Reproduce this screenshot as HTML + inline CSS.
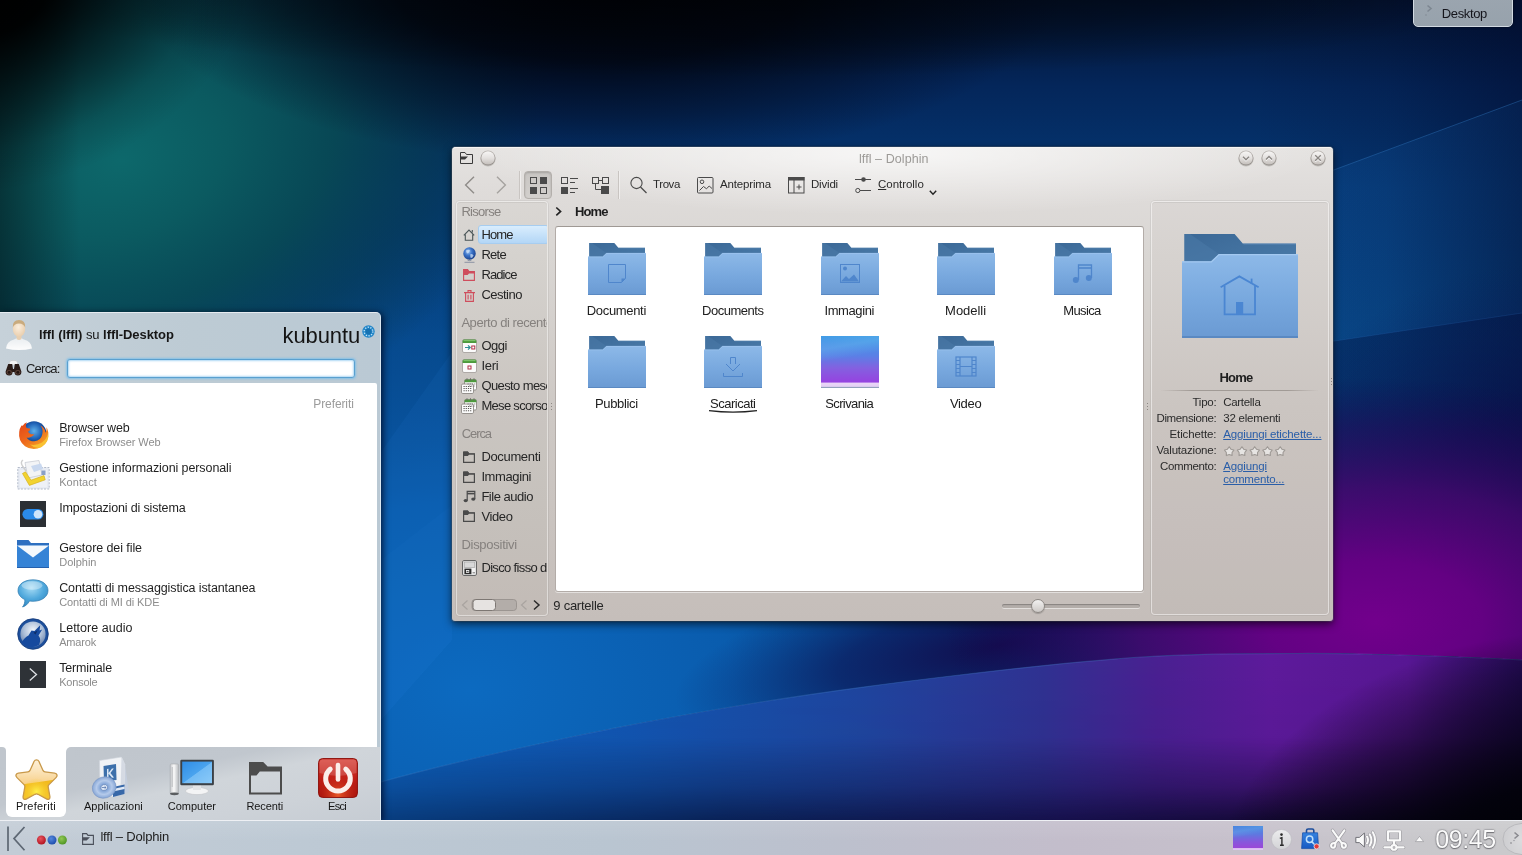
<!DOCTYPE html>
<html lang="it">
<head>
<meta charset="utf-8">
<title>Kubuntu – Dolphin</title>
<style>
*{box-sizing:border-box;margin:0;padding:0}
html,body{width:1522px;height:855px;overflow:hidden;background:#0a488c;font-family:"Liberation Sans","DejaVu Sans",sans-serif;color:#232323;}
#root{position:absolute;left:0;top:0;width:1522px;height:855px;will-change:transform;}
#bg{position:absolute;left:0;top:0;width:1522px;height:855px;}
.a{position:absolute}
.t{position:absolute;white-space:pre;}
svg{position:absolute;overflow:visible}
a{color:#2a5ea8;text-decoration:underline}
/* Desktop button */
#deskbtn{position:absolute;left:1413px;top:-5px;width:100px;height:32px;background:linear-gradient(#9ba5af,#97a2ac);border:1px solid #d2dae2;border-radius:5px;box-shadow:0 0 3px rgba(0,0,0,.5)}
/* Panel */
#panel{position:absolute;left:0;top:820px;width:1522px;height:35px;background:linear-gradient(rgba(255,255,255,.1),rgba(255,255,255,0) 60%),linear-gradient(90deg,#c3ccd6 0,#bdc9d4 20%,#b9c5d1 40%,#bcc0cd 55%,#c3bdcb 70%,#c6c0cb 82%,#c8c7cb 92%,#cacacc 100%);border-top:1px solid #eef0f4;}
/* Dolphin */
#dolphin{position:absolute;left:452px;top:147px;width:881px;height:474px;border-radius:4px 4px 3px 3px;background:radial-gradient(ellipse 430px 62px at 50% 6px,rgba(255,255,255,.7),rgba(255,255,255,.35) 50%,rgba(255,255,255,0) 100%),linear-gradient(#e5e3e1 0px,#dfdcda 40px,#d9d6d3 110px,#cec9c5 260px,#c5beba 473px);box-shadow:0 3px 9px rgba(0,0,0,.65),0 0 2px rgba(0,0,0,.7),0 0 0 1px rgba(200,215,235,.25);}
#dolphin:before{content:"";position:absolute;left:0;top:0;right:0;height:40px;border-radius:4px 4px 0 0;border-top:1px solid #f6f5f4;}
#sidebar{position:absolute;left:456px;top:201px;width:92px;height:415px;background:rgba(120,100,90,.035);border:1px solid rgba(255,255,255,.45);border-radius:4px;box-shadow:inset 0 1px 0 rgba(0,0,0,.06),0 0 0 1px rgba(0,0,0,.05)}
#view{position:absolute;left:555px;top:226px;width:589px;height:366px;background:#fff;border:1px solid #b3aca8;border-top-color:#9f9994;border-radius:3px;box-shadow:0 1px 0 rgba(255,255,255,.5)}
#info{position:absolute;left:1151px;top:201px;width:178px;height:414px;background:rgba(120,100,90,.03);border:1px solid rgba(255,255,255,.5);border-radius:4px;box-shadow:inset 0 1px 0 rgba(0,0,0,.06),0 0 0 1px rgba(0,0,0,.05)}
/* Kickoff */
#kick{position:absolute;left:0;top:312px;width:381px;height:509px;background:linear-gradient(90deg,#c6d1d9,#bdcbd4 50%,#bac9d4);border-top:1px solid #e6ebf0;border-right:1px solid #dbe8f1;border-top-right-radius:5px;box-shadow:2px 1px 7px rgba(0,0,20,.75)}
#klist{position:absolute;left:0;top:383px;width:377px;height:364px;background:#fff;border-top-right-radius:2px}
#ktabs{position:absolute;left:0;top:747px;width:380px;height:73px;background:linear-gradient(168deg,#bfc5cc 0,#c1c7ce 38%,#d0d5da 52%,#cdd2d8 75%,#c6ccd3 100%);}
#ktab1{position:absolute;left:6px;top:746px;width:60px;height:71px;background:#fff;border-radius:0 0 6px 6px}
#ktl{position:absolute;left:0;top:747px;width:6px;height:20px;background:#fff}
#ktl:after{content:"";position:absolute;inset:0;background:#c0c6cd;border-top-right-radius:4px}
#ktr{position:absolute;left:66px;top:747px;width:8px;height:20px;background:#fff}
#ktr:after{content:"";position:absolute;inset:0;background:#c0c6cd;border-top-left-radius:5px}
</style>
</head>
<body>
<div id="root">
<svg id="bg" viewBox="0 0 1522 855">
<defs>
<radialGradient id="g-teal" cx="0" cy="0" r="1" gradientUnits="userSpaceOnUse" gradientTransform="translate(122 160) rotate(-20) scale(440 300)">
<stop offset="0" stop-color="#0d686b"/><stop offset=".25" stop-color="#0b5b60" stop-opacity=".98"/><stop offset=".5" stop-color="#084a53" stop-opacity=".9"/><stop offset=".75" stop-color="#063a4a" stop-opacity=".55"/><stop offset="1" stop-color="#04303c" stop-opacity="0"/>
</radialGradient>
<radialGradient id="g-blue" cx="0" cy="0" r="1" gradientUnits="userSpaceOnUse" gradientTransform="translate(470 690) scale(660 470)">
<stop offset="0" stop-color="#0c6ac0"/><stop offset=".4" stop-color="#0a5fb2" stop-opacity=".92"/><stop offset=".75" stop-color="#07509a" stop-opacity=".5"/><stop offset="1" stop-color="#064482" stop-opacity="0"/>
</radialGradient>
<radialGradient id="g-purple" cx="0" cy="0" r="1" gradientUnits="userSpaceOnUse" gradientTransform="translate(1375 622) scale(430 245)">
<stop offset="0" stop-color="#72008c"/><stop offset=".25" stop-color="#660084" stop-opacity=".97"/><stop offset=".55" stop-color="#43086e" stop-opacity=".85"/><stop offset=".8" stop-color="#24085a" stop-opacity=".5"/><stop offset="1" stop-color="#10084a" stop-opacity="0"/>
</radialGradient>
<radialGradient id="g-dkp" cx="0" cy="0" r="1" gradientUnits="userSpaceOnUse" gradientTransform="translate(1560 560) scale(330 300)">
<stop offset="0" stop-color="#0a0638" stop-opacity=".9"/><stop offset=".5" stop-color="#0c0a48" stop-opacity=".55"/><stop offset="1" stop-color="#0a1a5a" stop-opacity="0"/>
</radialGradient>
<radialGradient id="g-mid" cx="0" cy="0" r="1" gradientUnits="userSpaceOnUse" gradientTransform="translate(1000 645) rotate(-10) scale(330 90)">
<stop offset="0" stop-color="#120a4a" stop-opacity=".95"/><stop offset=".5" stop-color="#0c1a5c" stop-opacity=".7"/><stop offset="1" stop-color="#0a2a70" stop-opacity="0"/>
</radialGradient>
<linearGradient id="g-rv" x1="1250" y1="0" x2="1522" y2="0" gradientUnits="userSpaceOnUse">
<stop offset="0" stop-color="#020a2c" stop-opacity="0"/><stop offset=".5" stop-color="#020a2c" stop-opacity=".14"/><stop offset="1" stop-color="#020a2c" stop-opacity=".52"/>
</linearGradient>
<linearGradient id="g-lv" x1="0" y1="0" x2="80" y2="0" gradientUnits="userSpaceOnUse">
<stop offset="0" stop-color="#000" stop-opacity=".4"/><stop offset="1" stop-color="#000" stop-opacity="0"/>
</linearGradient>
<radialGradient id="g-tl" cx="0" cy="0" r="1" gradientUnits="userSpaceOnUse" gradientTransform="translate(-10 -10) rotate(-15) scale(270 200)">
<stop offset="0" stop-color="#000"/><stop offset=".22" stop-color="#000" stop-opacity=".96"/><stop offset=".5" stop-color="#000" stop-opacity=".55"/><stop offset=".8" stop-color="#000" stop-opacity=".14"/><stop offset="1" stop-color="#000" stop-opacity="0"/>
</radialGradient>
<radialGradient id="g-tc" cx="0" cy="0" r="1" gradientUnits="userSpaceOnUse" gradientTransform="translate(600 -25) scale(470 190)">
<stop offset="0" stop-color="#000208"/><stop offset=".45" stop-color="#010612" stop-opacity=".88"/><stop offset=".75" stop-color="#020a1c" stop-opacity=".45"/><stop offset="1" stop-color="#020a20" stop-opacity="0"/>
</radialGradient>
<radialGradient id="g-topband" cx="0" cy="0" r="1" gradientUnits="userSpaceOnUse" gradientTransform="translate(760 -8) scale(760 85)">
<stop offset="0" stop-color="#000" stop-opacity=".6"/><stop offset=".55" stop-color="#000" stop-opacity=".35"/><stop offset="1" stop-color="#000" stop-opacity="0"/>
</radialGradient>
<radialGradient id="g-br" cx="0" cy="0" r="1" gradientUnits="userSpaceOnUse" gradientTransform="translate(1590 900) scale(380 270)">
<stop offset="0" stop-color="#000"/><stop offset=".45" stop-color="#02020a" stop-opacity=".95"/><stop offset=".75" stop-color="#04020f" stop-opacity=".5"/><stop offset="1" stop-color="#000" stop-opacity="0"/>
</radialGradient>
<linearGradient id="g-base" x1="0" y1="0" x2="0" y2="855" gradientUnits="userSpaceOnUse">
<stop offset="0" stop-color="#03122e"/><stop offset=".1" stop-color="#04265a"/><stop offset=".22" stop-color="#053874"/><stop offset=".4" stop-color="#064482"/><stop offset=".55" stop-color="#063f7e"/><stop offset="1" stop-color="#063678"/>
</linearGradient>
<linearGradient id="g-ray" x1="900" y1="360" x2="1522" y2="200" gradientUnits="userSpaceOnUse">
<stop offset="0" stop-color="#1a6fc4" stop-opacity="0"/><stop offset=".7" stop-color="#1563b6" stop-opacity=".22"/><stop offset="1" stop-color="#1260b0" stop-opacity=".26"/>
</linearGradient>
<linearGradient id="g-ray2" x1="0" y1="320" x2="0" y2="520" gradientUnits="userSpaceOnUse">
<stop offset="0" stop-color="#051d52" stop-opacity=".42"/><stop offset="1" stop-color="#051d52" stop-opacity=".1"/>
</linearGradient>
<linearGradient id="g-wave" x1="380" y1="0" x2="1522" y2="0" gradientUnits="userSpaceOnUse">
<stop offset="0" stop-color="#0d62be"/><stop offset=".22" stop-color="#1256b2"/><stop offset=".42" stop-color="#1f46a0"/><stop offset=".58" stop-color="#303292"/><stop offset=".68" stop-color="#4a2092"/><stop offset=".78" stop-color="#5e1a9c"/><stop offset=".9" stop-color="#581694"/><stop offset="1" stop-color="#260c5c"/>
</linearGradient>
<linearGradient id="g-wavefade" x1="0" y1="650" x2="0" y2="825" gradientUnits="userSpaceOnUse">
<stop offset="0" stop-color="#fff"/><stop offset=".5" stop-color="#fff" stop-opacity=".95"/><stop offset=".78" stop-color="#fff" stop-opacity=".55"/><stop offset="1" stop-color="#fff" stop-opacity=".06"/>
</linearGradient>
<mask id="m-wave"><rect x="0" y="600" width="1522" height="255" fill="url(#g-wavefade)"/></mask>
<linearGradient id="g-under" x1="380" y1="0" x2="1522" y2="0" gradientUnits="userSpaceOnUse">
<stop offset="0" stop-color="#083876"/><stop offset=".3" stop-color="#081c4c"/><stop offset=".6" stop-color="#120c42"/><stop offset="1" stop-color="#04020f"/>
</linearGradient>
<clipPath id="c-above"><path clip-rule="evenodd" d="M0,0 H1522 V855 H0 Z M0,905 C66.7,885.0 136.5,860.5 200,840 C263.5,819.5 319.2,799.2 381,782 C442.8,764.8 507.7,750.3 571,737 C634.3,723.7 697.7,712.2 761,702 C824.3,691.8 887.7,683.5 951,676 C1014.3,668.5 1083.7,660.8 1141,657 C1198.3,653.2 1251.8,653.8 1295,653.5 C1338.2,653.2 1362.2,653.9 1400,655 C1437.8,656.1 1472.0,657.2 1522,660 L1522,855 L0,855 Z"/></clipPath>
</defs>
<rect width="1522" height="855" fill="url(#g-base)"/>
<rect width="1522" height="855" fill="url(#g-blue)"/>
<polygon points="567,455 1522,100 1522,313" fill="url(#g-ray)"/>
<polygon points="567,455 1522,313 1522,700 1140,700" fill="url(#g-ray2)"/>
<rect x="1250" y="0" width="272" height="660" fill="url(#g-rv)"/>
<path d="M567,455 L1522,100" stroke="#3a86d0" stroke-opacity=".35" stroke-width="1" fill="none"/><path d="M1000,391 L1522,313" stroke="#2a70c0" stroke-opacity=".25" stroke-width="1" fill="none"/>
<polygon points="381,452 452,352 452,640 381,720" fill="#2a80d8" fill-opacity=".1"/>
<polygon points="381,560 452,505 452,640 381,720" fill="#2a80d8" fill-opacity=".08"/>
<rect width="1522" height="855" fill="url(#g-teal)"/>
<rect width="1522" height="855" fill="url(#g-tc)"/>
<rect width="1522" height="90" fill="url(#g-topband)"/>
<rect width="1522" height="855" fill="url(#g-dkp)"/>
<g clip-path="url(#c-above)"><rect width="1522" height="855" fill="url(#g-mid)"/><rect width="1522" height="855" fill="url(#g-purple)"/></g>
<path d="M0,905 C66.7,885.0 136.5,860.5 200,840 C263.5,819.5 319.2,799.2 381,782 C442.8,764.8 507.7,750.3 571,737 C634.3,723.7 697.7,712.2 761,702 C824.3,691.8 887.7,683.5 951,676 C1014.3,668.5 1083.7,660.8 1141,657 C1198.3,653.2 1251.8,653.8 1295,653.5 C1338.2,653.2 1362.2,653.9 1400,655 C1437.8,656.1 1472.0,657.2 1522,660 L1522,855 L0,855 Z" fill="url(#g-under)"/>
<path d="M0,905 C66.7,885.0 136.5,860.5 200,840 C263.5,819.5 319.2,799.2 381,782 C442.8,764.8 507.7,750.3 571,737 C634.3,723.7 697.7,712.2 761,702 C824.3,691.8 887.7,683.5 951,676 C1014.3,668.5 1083.7,660.8 1141,657 C1198.3,653.2 1251.8,653.8 1295,653.5 C1338.2,653.2 1362.2,653.9 1400,655 C1437.8,656.1 1472.0,657.2 1522,660 L1522,855 L0,855 Z" fill="url(#g-wave)" mask="url(#m-wave)"/><path d="M0,905 C66.7,885.0 136.5,860.5 200,840 C263.5,819.5 319.2,799.2 381,782 C442.8,764.8 507.7,750.3 571,737 C634.3,723.7 697.7,712.2 761,702 C824.3,691.8 887.7,683.5 951,676 C1014.3,668.5 1083.7,660.8 1141,657 C1198.3,653.2 1251.8,653.8 1295,653.5 C1338.2,653.2 1362.2,653.9 1400,655 C1437.8,656.1 1472.0,657.2 1522,660" fill="none" stroke="#5aa0e8" stroke-opacity=".22" stroke-width="1.2"/>
<rect width="80" height="855" fill="url(#g-lv)"/>
<rect width="1522" height="855" fill="url(#g-tl)"/>
<rect width="1522" height="855" fill="url(#g-br)"/>
</svg>

<div id="deskbtn"></div>
<svg style="left:1424px;top:4px" width="10" height="14" viewBox="0 0 10 14"><path d="M3.5,1.5 L7,4.5 L3.5,7.5" fill="none" stroke="#7d8791" stroke-width="1.6"/><circle cx="2" cy="11" r="1" fill="#8b959f"/></svg>
<div class="t" style="left:1441.7px;top:4.6px;font-size:13px;line-height:17px;letter-spacing:-0.34px;color:#15151c;">Desktop</div>
<div id="dolphin"></div>
<div id="sidebar"></div><div id="view"></div><div id="info"></div>
<div class="t" style="left:859.0px;top:150.7px;font-size:12.5px;line-height:16px;letter-spacing:0.07px;color:#9c9a97;">lffl – Dolphin</div>
<svg style="left:460px;top:152px" width="13" height="12" viewBox="0 0 13 12"><path d="M.5,11.5 V.5 H5 L6.5,2.5 H12.5 V11.5 Z" fill="none" stroke="#3a3a3a" stroke-width="1"/><path d="M.5,4.5 H8 L5,7.5 H.5 Z" fill="#3a3a3a"/></svg>
<svg style="left:479.4px;top:148.7px" width="18" height="19" viewBox="0 0 18 19"><defs><linearGradient id="wb488" x1="0" y1="0" x2="0" y2="1"><stop offset="0" stop-color="#f7f6f5"/><stop offset=".5" stop-color="#e4e1df"/><stop offset="1" stop-color="#c4bfbb"/></linearGradient><linearGradient id="wr488" x1="0" y1="0" x2="0" y2="1"><stop offset="0" stop-color="#b9b4b0"/><stop offset="1" stop-color="#8f8a86"/></linearGradient></defs><circle cx="9" cy="10" r="7.6" fill="#6d6762" opacity=".28"/><circle cx="9" cy="9" r="7.5" fill="url(#wr488)"/><circle cx="9" cy="8.9" r="6.7" fill="url(#wb488)"/><g transform="translate(1 1)"></g></svg>
<svg style="left:1237.4px;top:148.7px" width="18" height="19" viewBox="0 0 18 19"><defs><linearGradient id="wb1246" x1="0" y1="0" x2="0" y2="1"><stop offset="0" stop-color="#f7f6f5"/><stop offset=".5" stop-color="#e4e1df"/><stop offset="1" stop-color="#c4bfbb"/></linearGradient><linearGradient id="wr1246" x1="0" y1="0" x2="0" y2="1"><stop offset="0" stop-color="#b9b4b0"/><stop offset="1" stop-color="#8f8a86"/></linearGradient></defs><circle cx="9" cy="10" r="7.6" fill="#6d6762" opacity=".28"/><circle cx="9" cy="9" r="7.5" fill="url(#wr1246)"/><circle cx="9" cy="8.9" r="6.7" fill="url(#wb1246)"/><g transform="translate(1 1)"><path d="M5,6.8 L8,9.8 L11,6.8" fill="none" stroke="#fff" opacity=".8" transform="translate(0 1)" stroke-width="1.3"/><path d="M5,6.8 L8,9.8 L11,6.8" fill="none" stroke="#8a8683" stroke-width="1.3"/></g></svg>
<svg style="left:1260.4px;top:148.7px" width="18" height="19" viewBox="0 0 18 19"><defs><linearGradient id="wb1269" x1="0" y1="0" x2="0" y2="1"><stop offset="0" stop-color="#f7f6f5"/><stop offset=".5" stop-color="#e4e1df"/><stop offset="1" stop-color="#c4bfbb"/></linearGradient><linearGradient id="wr1269" x1="0" y1="0" x2="0" y2="1"><stop offset="0" stop-color="#b9b4b0"/><stop offset="1" stop-color="#8f8a86"/></linearGradient></defs><circle cx="9" cy="10" r="7.6" fill="#6d6762" opacity=".28"/><circle cx="9" cy="9" r="7.5" fill="url(#wr1269)"/><circle cx="9" cy="8.9" r="6.7" fill="url(#wb1269)"/><g transform="translate(1 1)"><path d="M5,9.5 L8,6.5 L11,9.5" fill="none" stroke="#fff" opacity=".8" transform="translate(0 1)" stroke-width="1.3"/><path d="M5,9.5 L8,6.5 L11,9.5" fill="none" stroke="#8a8683" stroke-width="1.3"/></g></svg>
<svg style="left:1309.4px;top:148.7px" width="18" height="19" viewBox="0 0 18 19"><defs><linearGradient id="wb1318" x1="0" y1="0" x2="0" y2="1"><stop offset="0" stop-color="#f7f6f5"/><stop offset=".5" stop-color="#e4e1df"/><stop offset="1" stop-color="#c4bfbb"/></linearGradient><linearGradient id="wr1318" x1="0" y1="0" x2="0" y2="1"><stop offset="0" stop-color="#b9b4b0"/><stop offset="1" stop-color="#8f8a86"/></linearGradient></defs><circle cx="9" cy="10" r="7.6" fill="#6d6762" opacity=".28"/><circle cx="9" cy="9" r="7.5" fill="url(#wr1318)"/><circle cx="9" cy="8.9" r="6.7" fill="url(#wb1318)"/><g transform="translate(1 1)"><path d="M5.2,5.2 L10.8,10.8 M10.8,5.2 L5.2,10.8" fill="none" stroke="#fff" opacity=".8" transform="translate(0 1)" stroke-width="1.3"/><path d="M5.2,5.2 L10.8,10.8 M10.8,5.2 L5.2,10.8" fill="none" stroke="#8a8683" stroke-width="1.3"/></g></svg>
<svg style="left:463px;top:176px" width="14" height="18" viewBox="0 0 14 18"><path d="M11,.8 L2.6,9 L11,17.2" fill="none" stroke="#8f8c89" stroke-width="1.4"/></svg>
<svg style="left:494px;top:176px" width="14" height="18" viewBox="0 0 14 18"><path d="M3,.8 L11.4,9 L3,17.2" fill="none" stroke="#a5a29f" stroke-width="1.4"/></svg>
<div class="a" style="left:519px;top:171px;width:2px;height:28px;background:linear-gradient(90deg,#c9c5c2 50%,#f0eeed 50%)"></div>
<div class="a" style="left:524px;top:171px;width:28px;height:28px;border-radius:4px;background:linear-gradient(#c9c6c3,#d3d0cd);border:1px solid #b3afab;box-shadow:inset 0 1px 2px rgba(0,0,0,.18)"></div>
<svg style="left:530px;top:177px" width="17" height="17" viewBox="0 0 17 17"><rect x=".5" y=".5" width="6" height="6" fill="none" stroke="#4a4a4a"/><rect x="10" y="0" width="7" height="7" fill="#4a4a4a"/><rect x="0" y="10" width="7" height="7" fill="#4a4a4a"/><rect x="10.5" y="10.5" width="6" height="6" fill="none" stroke="#4a4a4a"/></svg>
<svg style="left:561px;top:177px" width="17" height="17" viewBox="0 0 17 17"><rect x=".5" y=".5" width="6" height="6" fill="none" stroke="#4a4a4a"/><rect x="0" y="10" width="7" height="7" fill="#4a4a4a"/><path d="M9,1.5 H17 M9,5.5 H14 M9,11.5 H17 M9,15.5 H14" stroke="#4a4a4a" stroke-width="1"/></svg>
<svg style="left:592px;top:177px" width="17" height="17" viewBox="0 0 17 17"><rect x=".5" y=".5" width="6" height="6" fill="none" stroke="#4a4a4a"/><rect x="10.5" y=".5" width="6" height="6" fill="none" stroke="#4a4a4a"/><rect x="9" y="9" width="8" height="8" fill="#4a4a4a"/><path d="M7,3.5 H10 M3.5,7 V12.5 H9" fill="none" stroke="#4a4a4a"/></svg>
<div class="a" style="left:618px;top:171px;width:2px;height:28px;background:linear-gradient(90deg,#c9c5c2 50%,#f0eeed 50%)"></div>
<svg style="left:630px;top:176px" width="18" height="18" viewBox="0 0 18 18"><circle cx="6.5" cy="7" r="5.6" fill="none" stroke="#4a4a4a" stroke-width="1.1"/><path d="M10.5,11 L16.5,17" stroke="#4a4a4a" stroke-width="1.3"/></svg>
<div class="t" style="left:653.0px;top:177.0px;font-size:11.5px;line-height:15px;letter-spacing:-0.40px;color:#2b2b2b;">Trova</div>
<svg style="left:697px;top:177px" width="17" height="17" viewBox="0 0 17 17"><rect x=".5" y=".5" width="15.5" height="15.5" rx="1" fill="none" stroke="#4a4a4a"/><circle cx="5" cy="4.8" r="1.8" fill="none" stroke="#4a4a4a"/><path d="M2.5,13.5 L6.5,9.5 L9.5,11.8 L12.2,9 L15,11.5" fill="none" stroke="#4a4a4a"/></svg>
<div class="t" style="left:720.0px;top:177.0px;font-size:11.5px;line-height:15px;letter-spacing:-0.16px;color:#2b2b2b;">Anteprima</div>
<svg style="left:788px;top:177px" width="17" height="17" viewBox="0 0 17 17"><rect x=".5" y=".5" width="15.5" height="15.5" fill="none" stroke="#4a4a4a"/><rect x="0" y="0" width="16.5" height="3.5" fill="#4a4a4a"/><path d="M6,3 V16 M8.5,10 H13.5 M11,7.5 V12.5" stroke="#4a4a4a"/></svg>
<div class="t" style="left:811.0px;top:177.0px;font-size:11.5px;line-height:15px;letter-spacing:-0.19px;color:#2b2b2b;">Dividi</div>
<svg style="left:855px;top:176px" width="17" height="18" viewBox="0 0 17 18"><path d="M0,3.5 H16 M5,14.5 H16" stroke="#4a4a4a"/><circle cx="8.5" cy="3.5" r="2.3" fill="#4a4a4a"/><circle cx="2.8" cy="14.5" r="2.1" fill="none" stroke="#4a4a4a"/></svg>
<div class="t" style="left:878.0px;top:177.0px;font-size:11.5px;line-height:15px;letter-spacing:-0.03px;color:#2b2b2b;"><u>C</u>ontrollo</div>
<svg style="left:929px;top:190px" width="8" height="6" viewBox="0 0 8 6"><path d="M.8,.8 L4,4.2 L7.2,.8" fill="none" stroke="#222" stroke-width="1.4"/></svg>
<svg style="left:555px;top:206px" width="8" height="11" viewBox="0 0 8 11"><path d="M1.3,1.5 L5.6,5.4 L1.3,9.3" fill="none" stroke="#222" stroke-width="1.6"/></svg>
<div class="t" style="left:575.0px;top:203.0px;font-size:13px;line-height:17px;font-weight:700;letter-spacing:-0.86px;color:#1e1e1e;">Home</div>
<div class="a" style="left:456px;top:201px;width:91px;height:415px;overflow:hidden">
<div class="t" style="left:5.4px;top:2.0px;font-size:13px;line-height:17px;letter-spacing:-0.71px;color:#85817e;">Risorse</div>
<div class="a" style="left:21.5px;top:24px;width:71px;height:19px;border-radius:3px;background:linear-gradient(#d9edfd,#b3d6f6);border:1px solid #a7cdf0"></div>
<div class="t" style="left:25.4px;top:25.0px;font-size:13px;line-height:17px;letter-spacing:-0.90px;color:#262626;">Home</div>
<div class="t" style="left:25.4px;top:45.2px;font-size:13px;line-height:17px;letter-spacing:-0.72px;color:#262626;">Rete</div>
<div class="t" style="left:25.4px;top:65.3px;font-size:13px;line-height:17px;letter-spacing:-0.89px;color:#262626;">Radice</div>
<div class="t" style="left:25.4px;top:85.4px;font-size:13px;line-height:17px;letter-spacing:-0.50px;color:#262626;">Cestino</div>
<div class="t" style="left:5.4px;top:113.4px;font-size:13px;line-height:17px;color:#85817e;letter-spacing:-.45px;">Aperto di recente</div>
<div class="t" style="left:25.4px;top:136.0px;font-size:13px;line-height:17px;letter-spacing:-0.47px;color:#262626;">Oggi</div>
<div class="t" style="left:25.4px;top:155.9px;font-size:13px;line-height:17px;letter-spacing:-0.24px;color:#262626;">Ieri</div>
<div class="t" style="left:25.4px;top:176.2px;font-size:13px;line-height:17px;color:#262626;letter-spacing:-.6px;">Questo mese</div>
<div class="t" style="left:25.4px;top:196.2px;font-size:13px;line-height:17px;letter-spacing:-0.69px;color:#262626;">Mese scorso</div>
<div class="t" style="left:5.7px;top:223.6px;font-size:13px;line-height:17px;letter-spacing:-1.08px;color:#85817e;">Cerca</div>
<div class="t" style="left:25.4px;top:247.0px;font-size:13px;line-height:17px;letter-spacing:-0.34px;color:#262626;">Documenti</div>
<div class="t" style="left:25.4px;top:266.8px;font-size:13px;line-height:17px;letter-spacing:-0.39px;color:#262626;">Immagini</div>
<div class="t" style="left:25.4px;top:286.8px;font-size:13px;line-height:17px;letter-spacing:-0.48px;color:#262626;">File audio</div>
<div class="t" style="left:25.4px;top:306.5px;font-size:13px;line-height:17px;letter-spacing:-0.38px;color:#262626;">Video</div>
<div class="t" style="left:5.4px;top:334.7px;font-size:13px;line-height:17px;letter-spacing:-0.27px;color:#85817e;">Dispositivi</div>
<div class="t" style="left:25.4px;top:357.6px;font-size:13px;line-height:17px;color:#262626;letter-spacing:-.65px;">Disco fisso da 20 GiB</div>
</div>
<svg style="left:463px;top:229px" width="12" height="12" viewBox="0 0 12 12"><path d="M.8,6.3 L6,1 L11.2,6.3 M2.3,5.5 V11.3 H9.7 V5.5 M9.3,1 V3.6" fill="none" stroke="#4b5658" stroke-width="1.1"/></svg>
<svg style="left:462.5px;top:246.5px" width="13" height="16" viewBox="0 0 13 16"><defs><radialGradient id="gl" cx=".4" cy=".35" r=".7"><stop offset="0" stop-color="#9cc4f2"/><stop offset=".45" stop-color="#3a72c8"/><stop offset="1" stop-color="#173c86"/></radialGradient></defs><circle cx="6.5" cy="6.5" r="6.2" fill="url(#gl)"/><path d="M3,3.5 Q5,2 7,3.2 Q6.5,5.5 4.5,6.5 Q3,5.5 3,3.5 Z M7.5,7 Q10,6.5 10.5,8.5 Q9.5,11 7.8,11 Q7,9 7.5,7 Z" fill="#cfe2f8" opacity=".75"/><path d="M4.5,13 Q6.5,14.2 8.5,13" stroke="#7d8ba0" fill="none" stroke-width="1"/><path d="M1.5,15.3 H11.5" stroke="#8b93a3" stroke-width="1"/></svg>
<svg style="left:463px;top:269px" width="12" height="12" viewBox="0 0 12 12"><path d="M.6,11.4 V.6 H4.6 L6,2.6 H11.4 V11.4 Z" fill="none" stroke="#cf4d5c" stroke-width="1.1"/><path d="M.6,.6 H4.6 L6,2.6 H11.4 V4.6 H6 L4.6,6 H.6 Z" fill="#cf4d5c"/></svg>
<svg style="left:464px;top:289.5px" width="11" height="12" viewBox="0 0 11 12"><path d="M0,2.6 H11 M4,2.4 V.6 H7 V2.4 M1.6,2.8 V11.4 H9.4 V2.8 M4.1,4.8 V9.4 M6.9,4.8 V9.4" fill="none" stroke="#cf4d5c" stroke-width="1.1"/></svg>
<svg style="left:461.5px;top:338px" width="15" height="16" viewBox="0 0 15 16"><rect x=".5" y="1.5" width="14" height="13" rx="1.5" fill="#fbfbfb" stroke="#a7a39f" stroke-width=".9"/><path d="M.6,5 V3 Q.6,1.5 2,1.5 H13 Q14.4,1.5 14.4,3 V5 Z" fill="#4c9a3c"/><path d="M1.5,2.6 H13.5" stroke="#8fd27c" stroke-width=".8"/><path d="M3,9.5 H8 M6,7.3 L8.2,9.5 L6,11.7" fill="none" stroke="#2e8f96" stroke-width="1.2"/><rect x="9.8" y="8" width="3" height="3" fill="#fff" stroke="#b03048" stroke-width="1"/></svg>
<svg style="left:461.5px;top:358px" width="15" height="16" viewBox="0 0 15 16"><rect x=".5" y="1.5" width="14" height="13" rx="1.5" fill="#fbfbfb" stroke="#a7a39f" stroke-width=".9"/><path d="M.6,5 V3 Q.6,1.5 2,1.5 H13 Q14.4,1.5 14.4,3 V5 Z" fill="#4c9a3c"/><path d="M1.5,2.6 H13.5" stroke="#8fd27c" stroke-width=".8"/><rect x="6" y="8" width="3" height="3" fill="#fff" stroke="#b03048" stroke-width="1"/></svg>
<svg style="left:461px;top:377.6px" width="16" height="16" viewBox="0 0 16 16"><rect x="3.5" y="1.5" width="12" height="10.5" rx="1.3" fill="#fbfbfb" stroke="#8d8985" stroke-width=".9"/><path d="M3.6,4.2 V2.8 Q3.6,1.5 5,1.5 H14 Q15.4,1.5 15.4,2.8 V4.2 Z" fill="#4c9a3c"/><path d="M6,.3 V2.6 M9.5,.3 V2.6 M13,.3 V2.6" stroke="#6d6a66" stroke-width="1"/><rect x=".5" y="6" width="12" height="9.5" rx="1.3" fill="#fbfbfb" stroke="#8d8985" stroke-width=".9"/><path d="M2.5,8.5 H11 M2.5,10.5 H11 M2.5,12.7 H11" stroke="#5b5856" stroke-width="1.1" stroke-dasharray="1.2 1"/><path d="M6.5,6 H14.5 M8,8 H14.2" stroke="#5b5856" stroke-width="1.1" stroke-dasharray="1.2 1" opacity=".7"/></svg>
<svg style="left:461px;top:397.6px" width="16" height="16" viewBox="0 0 16 16"><rect x="3.5" y="1.5" width="12" height="10.5" rx="1.3" fill="#fbfbfb" stroke="#8d8985" stroke-width=".9"/><path d="M3.6,4.2 V2.8 Q3.6,1.5 5,1.5 H14 Q15.4,1.5 15.4,2.8 V4.2 Z" fill="#4c9a3c"/><path d="M6,.3 V2.6 M9.5,.3 V2.6 M13,.3 V2.6" stroke="#6d6a66" stroke-width="1"/><rect x=".5" y="6" width="12" height="9.5" rx="1.3" fill="#fbfbfb" stroke="#8d8985" stroke-width=".9"/><path d="M2.5,8.5 H11 M2.5,10.5 H11 M2.5,12.7 H11" stroke="#5b5856" stroke-width="1.1" stroke-dasharray="1.2 1"/><path d="M6.5,6 H14.5 M8,8 H14.2" stroke="#5b5856" stroke-width="1.1" stroke-dasharray="1.2 1" opacity=".7"/></svg>
<svg style="left:462.5px;top:450.5px" width="13" height="12" viewBox="0 0 13 12"><path d="M.6,11.4 V1 H4.6 L6,2.8 H11.4 V11.4 Z" fill="none" stroke="#4a4a4a" stroke-width="1.2"/><path d="M.6,.6 H4.8 L6.2,2.6 H11.6 V3.6 H6.2 L4.8,5 H.6 Z" fill="#4a4a4a"/></svg>
<svg style="left:462.5px;top:470.5px" width="13" height="12" viewBox="0 0 13 12"><path d="M.6,11.4 V1 H4.6 L6,2.8 H11.4 V11.4 Z" fill="none" stroke="#4a4a4a" stroke-width="1.2"/><path d="M.6,.6 H4.8 L6.2,2.6 H11.6 V3.6 H6.2 L4.8,5 H.6 Z" fill="#4a4a4a"/></svg>
<svg style="left:462.5px;top:490px" width="13" height="13" viewBox="0 0 13 13"><path d="M4.2,10.5 V1.4 H11.8 V9" fill="none" stroke="#4a4a4a" stroke-width="1.2"/><path d="M4.2,3.6 H11.8" stroke="#4a4a4a" stroke-width="1.6"/><ellipse cx="2.7" cy="10.6" rx="2.1" ry="1.7" fill="#4a4a4a"/><ellipse cx="10.3" cy="9.1" rx="2.1" ry="1.7" fill="#4a4a4a"/></svg>
<svg style="left:462.5px;top:510.3px" width="13" height="12" viewBox="0 0 13 12"><path d="M.6,11.4 V1 H4.6 L6,2.8 H11.4 V11.4 Z" fill="none" stroke="#4a4a4a" stroke-width="1.2"/><path d="M.6,.6 H4.8 L6.2,2.6 H11.6 V3.6 H6.2 L4.8,5 H.6 Z" fill="#4a4a4a"/></svg>
<svg style="left:461.5px;top:560px" width="15" height="16" viewBox="0 0 15 16"><rect x=".6" y=".6" width="13.8" height="14.8" rx="1.2" fill="#f2f2f2" stroke="#5a5a5a" stroke-width="1"/><rect x="2.2" y="2" width="10.6" height="5.4" fill="#d9d9d9" stroke="#9b9b9b" stroke-width=".6"/><rect x="2.4" y="8.6" width="7" height="5.6" fill="#2c2c2c"/><rect x="4" y="10" width="3.2" height="2.8" fill="#f5f5f5"/><path d="M4.6,11.4 H6.6" stroke="#2c2c2c" stroke-width=".9"/><path d="M10.6,12.8 H13" stroke="#777" stroke-width="1"/></svg>
<svg style="left:461px;top:598px" width="84" height="14" viewBox="0 0 84 14"><path d="M6.5,2.5 L1.5,7 L6.5,11.5" fill="none" stroke="#a9a4a0" stroke-width="1.2"/><rect x="11" y="1.5" width="44.5" height="11" rx="3" fill="#b3ada9" stroke="#938d89" stroke-width=".8"/><rect x="12" y="1.5" width="22.5" height="11" rx="3" fill="#e6e3e1" stroke="#7d7773" stroke-width="1"/><path d="M65.5,2.5 L60.5,7 L65.5,11.5" fill="none" stroke="#a9a4a0" stroke-width="1.2"/><path d="M73,2.5 L78,7 L73,11.5" fill="none" stroke="#2a2a2a" stroke-width="1.5"/></svg>
<div class="t" style="left:553.3px;top:596.7px;font-size:13px;line-height:17px;letter-spacing:-0.25px;color:#262626;">9 cartelle</div>
<div class="a" style="left:1002px;top:603.5px;width:138px;height:4px;border-radius:2px;background:#b3ada9;box-shadow:inset 0 1px 1px rgba(0,0,0,.25),0 1px 0 rgba(255,255,255,.5)"></div>
<div class="a" style="left:1031px;top:598.5px;width:14px;height:14px;border-radius:7px;background:linear-gradient(#f2f1f0,#cdc9c6);border:1px solid #8d8884;box-shadow:0 1px 1px rgba(0,0,0,.2)"></div>
<div class="a" style="left:551px;top:403px;width:1px;height:9px;background:repeating-linear-gradient(#8d8884 0,#8d8884 1px,transparent 1px,transparent 3px)"></div>
<div class="a" style="left:1147px;top:403px;width:1px;height:9px;background:repeating-linear-gradient(#8d8884 0,#8d8884 1px,transparent 1px,transparent 3px)"></div>
<div class="a" style="left:1330.5px;top:378px;width:1px;height:9px;background:repeating-linear-gradient(#8d8884 0,#8d8884 1px,transparent 1px,transparent 3px)"></div>

<svg width="0" height="0" style="position:absolute">
<defs>
<linearGradient id="ff" x1="0" y1="0" x2="0" y2="1"><stop offset="0" stop-color="#8db9e8"/><stop offset=".55" stop-color="#78a8de"/><stop offset="1" stop-color="#6a9ad3"/></linearGradient>
<linearGradient id="fb" x1="0" y1="0" x2="1" y2="1"><stop offset="0" stop-color="#3b6896"/><stop offset="1" stop-color="#4b7dab"/></linearGradient>
<symbol id="folder" viewBox="0 0 58 52">
<path d="M1.2,0 H26.3 L30.4,4.7 H57 V20 H1.2 Z" fill="url(#fb)"/><path d="M1.2,0 H4 L18.4,10 L14.6,13.6 H1.2 Z" fill="#4b7aa8" opacity=".55"/><path d="M30.4,4.7 H57 V5.3 H30.9 Z" fill="#6b98c4" opacity=".6"/>
<path d="M0,13.6 H14.6 L18.4,10 H58 V52 H0 Z" fill="url(#ff)"/>
<rect x="0" y="51" width="58" height="1" fill="#5a89c2"/>
<path d="M0,13.9 H14.7 L18.5,10.3 H58" fill="none" stroke="#a9cdf2" stroke-width=".6" opacity=".8"/>
</symbol>
</defs>
</svg>

<svg class="a" style="left:588px;top:243px" width="58" height="52" viewBox="0 0 58 52"><use href="#folder"/><path d="M20.5,21.5 H37.5 V35.5 L33.5,39.5 H20.5 Z" fill="none" stroke="#4f86cc" stroke-width="1"/><path d="M37.5,35.5 H33.5 V39.5 Z" fill="#4f86cc"/></svg>
<div class="t" style="left:586.8px;top:302.0px;font-size:13px;line-height:17px;letter-spacing:-0.33px;color:#202020;">Documenti</div>
<svg class="a" style="left:704px;top:243px" width="58" height="52" viewBox="0 0 58 52"><use href="#folder"/></svg>
<div class="t" style="left:702.1px;top:302.0px;font-size:13px;line-height:17px;letter-spacing:-0.49px;color:#202020;">Documents</div>
<svg class="a" style="left:821px;top:243px" width="58" height="52" viewBox="0 0 58 52"><use href="#folder"/><rect x="19.5" y="21.5" width="19" height="18" fill="none" stroke="#4f86cc"/><circle cx="24" cy="25.5" r="2" fill="#4f86cc"/><path d="M20,38.5 L25,33 L28,36 L33,31.5 L38,38.5 Z" fill="#4f86cc"/></svg>
<div class="t" style="left:824.5px;top:302.0px;font-size:13px;line-height:17px;letter-spacing:-0.41px;color:#202020;">Immagini</div>
<svg class="a" style="left:937px;top:243px" width="58" height="52" viewBox="0 0 58 52"><use href="#folder"/></svg>
<div class="t" style="left:945.1px;top:302.0px;font-size:13px;line-height:17px;letter-spacing:-0.03px;color:#202020;">Modelli</div>
<svg class="a" style="left:1054px;top:243px" width="58" height="52" viewBox="0 0 58 52"><use href="#folder"/><path d="M24.5,37 V22 H37.5 V35" fill="none" stroke="#4f86cc" stroke-width="1.3"/><path d="M24.5,25 H37.5" stroke="#4f86cc" stroke-width="1.6"/><circle cx="21.8" cy="37" r="3" fill="#4f86cc"/><circle cx="34.8" cy="35" r="3" fill="#4f86cc"/></svg>
<div class="t" style="left:1063.2px;top:302.0px;font-size:13px;line-height:17px;letter-spacing:-0.61px;color:#202020;">Musica</div>
<svg class="a" style="left:588px;top:336px" width="58" height="52" viewBox="0 0 58 52"><use href="#folder"/></svg>
<div class="t" style="left:594.9px;top:394.8px;font-size:13px;line-height:17px;letter-spacing:-0.32px;color:#202020;">Pubblici</div>
<svg class="a" style="left:704px;top:336px" width="58" height="52" viewBox="0 0 58 52"><use href="#folder"/><path d="M26.5,21.5 H31.5 V28 M26.5,21.5 V28 M22,28 L29,35 L36,28" fill="none" stroke="#4f86cc" stroke-width="1"/><path d="M19.5,37 V40.5 H38.5 V37" fill="none" stroke="#4f86cc" stroke-width="1"/></svg>
<div class="t" style="left:710.0px;top:394.8px;font-size:13px;line-height:17px;letter-spacing:-0.48px;color:#202020;">Scaricati</div>
<div class="a" style="left:821px;top:336px;width:58px;height:52px;background:linear-gradient(170deg,rgba(110,190,240,0) 0,rgba(110,190,240,.35) 22%,rgba(110,190,240,0) 42%),linear-gradient(180deg,#409ce6 0,#5a80e6 38%,#8460e0 62%,#9642e0 89%,#ead6f8 90%,#e4d0f4 97%,#93a0bd 98%)"></div>
<div class="t" style="left:825.2px;top:394.8px;font-size:13px;line-height:17px;letter-spacing:-0.61px;color:#202020;">Scrivania</div>
<svg class="a" style="left:937px;top:336px" width="58" height="52" viewBox="0 0 58 52"><use href="#folder"/><rect x="19" y="21" width="20" height="19" fill="none" stroke="#4f86cc" stroke-width="1.2"/><path d="M23,21 V40 M35,21 V40 M23,30.5 H35" stroke="#4f86cc" stroke-width="1.2"/><path d="M19,24.5 H23 M19,28.5 H23 M19,32.5 H23 M19,36.5 H23 M35,24.5 H39 M35,28.5 H39 M35,32.5 H39 M35,36.5 H39" stroke="#4f86cc" stroke-width="1"/></svg>
<div class="t" style="left:949.9px;top:394.8px;font-size:13px;line-height:17px;letter-spacing:-0.30px;color:#202020;">Video</div>
<svg style="left:709px;top:410px" width="48" height="4" viewBox="0 0 48 4"><path d="M0,.6 Q24,3.6 48,.6" fill="none" stroke="#222" stroke-width="1.3"/></svg>
<svg style="left:1182px;top:234px" width="116" height="104" viewBox="0 0 58 52"><use href="#folder"/><g fill="none" stroke="#4a86d2" stroke-width=".9"><path d="M19.3,26.6 L28.7,21.2 L38.3,26.6"/><path d="M21.3,25.8 V40.2 H36.5 V25.8"/><path d="M34.8,22.3 V25"/></g><rect x="27" y="34" width="3.6" height="6.2" fill="#4a86d2"/></svg>
<div class="t" style="left:1219.5px;top:369.2px;font-size:13px;line-height:17px;font-weight:700;letter-spacing:-0.78px;color:#1e1e1e;">Home</div>
<div class="a" style="left:1160px;top:389.5px;width:159px;height:1px;background:linear-gradient(90deg,rgba(150,143,138,0),rgba(150,143,138,.8) 20%,rgba(150,143,138,.8) 80%,rgba(150,143,138,0))"></div>
<div class="t" style="left:1192.5px;top:394.7px;font-size:11.5px;line-height:15px;letter-spacing:-0.25px;color:#2b2b2b;">Tipo:</div>
<div class="t" style="left:1156.5px;top:410.8px;font-size:11.5px;line-height:15px;letter-spacing:-0.37px;color:#2b2b2b;">Dimensione:</div>
<div class="t" style="left:1169.5px;top:426.9px;font-size:11.5px;line-height:15px;letter-spacing:-0.11px;color:#2b2b2b;">Etichette:</div>
<div class="t" style="left:1156.5px;top:443.0px;font-size:11.5px;line-height:15px;letter-spacing:-0.21px;color:#2b2b2b;">Valutazione:</div>
<div class="t" style="left:1160.0px;top:459.0px;font-size:11.5px;line-height:15px;letter-spacing:-0.34px;color:#2b2b2b;">Commento:</div>
<div class="t" style="left:1223.2px;top:394.7px;font-size:11.5px;line-height:15px;letter-spacing:-0.29px;color:#2b2b2b;">Cartella</div>
<div class="t" style="left:1223.2px;top:410.8px;font-size:11.5px;line-height:15px;letter-spacing:-0.20px;color:#2b2b2b;">32 elementi</div>
<div class="t" style="left:1223.2px;top:426.9px;font-size:11.5px;line-height:15px;letter-spacing:-0.13px;"><a>Aggiungi etichette...</a></div>
<div class="t" style="left:1223.2px;top:459.0px;font-size:11.5px;line-height:15px;letter-spacing:-0.13px;"><a>Aggiungi</a></div>
<div class="t" style="left:1223.2px;top:472.2px;font-size:11.5px;line-height:15px;letter-spacing:-0.19px;"><a>commento...</a></div>
<svg style="left:1224px;top:445.5px" width="64" height="12" viewBox="0 0 64 12"><path transform="translate(0.0,0)" d="M5.20,0.70 L6.96,3.17 L9.86,4.09 L8.05,6.53 L8.08,9.56 L5.20,8.60 L2.32,9.56 L2.35,6.53 L0.54,4.09 L3.44,3.17 Z" fill="#e6e4e2" stroke="#9e9995" stroke-width="1.1" stroke-linejoin="round"/><path transform="translate(12.75,0)" d="M5.20,0.70 L6.96,3.17 L9.86,4.09 L8.05,6.53 L8.08,9.56 L5.20,8.60 L2.32,9.56 L2.35,6.53 L0.54,4.09 L3.44,3.17 Z" fill="#e6e4e2" stroke="#9e9995" stroke-width="1.1" stroke-linejoin="round"/><path transform="translate(25.5,0)" d="M5.20,0.70 L6.96,3.17 L9.86,4.09 L8.05,6.53 L8.08,9.56 L5.20,8.60 L2.32,9.56 L2.35,6.53 L0.54,4.09 L3.44,3.17 Z" fill="#e6e4e2" stroke="#9e9995" stroke-width="1.1" stroke-linejoin="round"/><path transform="translate(38.25,0)" d="M5.20,0.70 L6.96,3.17 L9.86,4.09 L8.05,6.53 L8.08,9.56 L5.20,8.60 L2.32,9.56 L2.35,6.53 L0.54,4.09 L3.44,3.17 Z" fill="#e6e4e2" stroke="#9e9995" stroke-width="1.1" stroke-linejoin="round"/><path transform="translate(51.0,0)" d="M5.20,0.70 L6.96,3.17 L9.86,4.09 L8.05,6.53 L8.08,9.56 L5.20,8.60 L2.32,9.56 L2.35,6.53 L0.54,4.09 L3.44,3.17 Z" fill="#e6e4e2" stroke="#9e9995" stroke-width="1.1" stroke-linejoin="round"/></svg>
<div id="kick"></div><div id="klist"></div><div id="ktabs"></div><div id="ktl"></div><div id="ktr"></div><div id="ktab1"></div>
<svg style="left:5px;top:319px" width="28" height="32" viewBox="0 0 28 32"><defs><radialGradient id="sk" cx=".45" cy=".4" r=".7"><stop offset="0" stop-color="#fbeedd"/><stop offset="1" stop-color="#e6c9a6"/></radialGradient><linearGradient id="bd" x1="0" y1="0" x2="0" y2="1"><stop offset="0" stop-color="#e9edf0"/><stop offset="1" stop-color="#fdfdfd"/></linearGradient></defs><path d="M1,29.5 Q1.5,22.5 9,20.5 L12,19 H16 L19,20.5 Q26.5,22.5 27,29.5 Q14,32.5 1,29.5 Z" fill="url(#bd)"/><path d="M11.6,15 H16.4 V20 Q14,22 11.6,20 Z" fill="#e8cfb0"/><ellipse cx="14" cy="9.8" rx="6.2" ry="8.2" fill="url(#sk)"/><path d="M7.8,8.5 Q7.2,1.2 14,1 Q20.8,1.2 20.2,8.5 Q19,4.6 14,4.4 Q9,4.6 7.8,8.5 Z" fill="#c9ab7e"/></svg>
<svg style="left:5px;top:360px" width="17" height="16" viewBox="0 0 17 16"><path d="M4.5,2.2 L6,.6 H11 L12.5,2.2 V5 H4.5 Z" fill="#f4f4f4" stroke="#bdbdbd" stroke-width=".5"/><path d="M3.2,4 H7.2 L8,9 H9 L9.8,4 H13.8 L16.4,11.5 Q16.6,15.5 12.8,15.5 Q9.6,15.5 9.4,12 H7.6 Q7.4,15.5 4.2,15.5 Q.4,15.5 .6,11.5 Z" fill="#2a1b16"/><ellipse cx="4.2" cy="12.2" rx="2.6" ry="2.3" fill="#5b4137"/><ellipse cx="12.8" cy="12.2" rx="2.6" ry="2.3" fill="#5b4137"/><ellipse cx="4.2" cy="12.4" rx="1.5" ry="1.3" fill="#22140f"/><ellipse cx="12.8" cy="12.4" rx="1.5" ry="1.3" fill="#22140f"/></svg>
<svg style="left:361.5px;top:324.5px" width="13" height="13" viewBox="0 0 13 13"><circle cx="6.5" cy="6.5" r="6.2" fill="#2386c8"/><circle cx="6.5" cy="6.5" r="3" fill="#1672b2"/><circle cx="6.5" cy="6.5" r="4.3" fill="none" stroke="#c4e6f9" stroke-width="1.4" stroke-dasharray="1.2 1.5"/></svg>
<svg style="left:18px;top:418.5px" width="31" height="31" viewBox="0 0 31 31"><defs><radialGradient id="fxg" cx=".5" cy=".4" r=".55"><stop offset="0" stop-color="#5fb0ea"/><stop offset=".6" stop-color="#1d5fb4"/><stop offset="1" stop-color="#0d2f6e"/></radialGradient><linearGradient id="fxo" x1=".1" y1="0" x2=".9" y2="1"><stop offset="0" stop-color="#e2481a"/><stop offset=".5" stop-color="#ee6a1c"/><stop offset="1" stop-color="#f7b32a"/></linearGradient></defs><circle cx="16" cy="14.5" r="12.3" fill="url(#fxg)"/><path d="M3.5,6.5 Q1.5,9.5 1.2,13 Q0,22 7,27.2 Q15,32.5 23.5,28 Q31.5,23 30.2,13 Q29.8,10 28.5,8.2 Q29,11.5 27.6,13.8 Q27,9 22.5,6.6 Q25.5,10.5 24.2,15.5 Q23,21.5 16.5,22.3 Q11,22.3 8.6,18.4 Q11.5,19.2 13.8,17.6 L16.5,15.6 Q15.2,15 13.2,15.2 Q11,14.8 10,12.8 Q12.5,11.4 12.2,9.4 Q10,9.8 8.2,8.4 Q7.5,5.5 8.8,3.2 Q5.8,4.2 4.8,6.8 Q4,6.4 3.5,6.5 Z" fill="url(#fxo)"/><path d="M23.5,28 Q31.5,23 30.2,13 Q29.5,19.5 24,23.5 Q19,26.8 12,25.6 Q17.5,30.5 23.5,28 Z" fill="#f9c834" opacity=".85"/></svg>
<svg style="left:17px;top:458px" width="33" height="32" viewBox="0 0 33 32"><rect x=".8" y="9.5" width="31.4" height="21.5" fill="#e7ebf3" stroke="#b4bccb" stroke-width="1" stroke-dasharray="2 1.3"/><path d="M3,12 H30 V29 H3 Z" fill="#eef1f7"/><path d="M8,4.5 L22,2.5 L25,17 L11,20 Z" fill="#f3f4f6" stroke="#c3c7d0" stroke-width=".7"/><path d="M14,8 L24,5.5 L26,11 L17,14 Z" fill="#c9d8ef"/><path d="M5.5,15.5 L8.5,13.8 L14,22.2 L27,17.6 L28.2,21.8 L12.4,27.4 Z" fill="#f2d330" stroke="#d6b21c" stroke-width=".7"/><path d="M6,2 Q3,4 5.5,8 L9,13" fill="none" stroke="#cfcfcf" stroke-width="1.4"/><rect x="24.5" y="12.5" width="4" height="4.5" fill="#8aa0c8"/></svg>
<svg style="left:20px;top:501px" width="26" height="26" viewBox="0 0 26 26"><rect width="26" height="26" fill="#2b2f34"/><rect x="2.4" y="8" width="21" height="10.6" rx="5.3" fill="#2b8be9"/><circle cx="18" cy="13.3" r="4.3" fill="#cfe5fa"/></svg>
<svg style="left:17px;top:540px" width="32" height="28" viewBox="0 0 32 28"><path d="M0,0 H11.5 L14,3 H32 V27.5 H0 Z" fill="#2d6fc0"/><path d="M0,5.5 H32 V27.5 H0 Z" fill="#3583d6"/><path d="M0,5.5 H32 L16,17.5 Z" fill="#f4f8fc"/><path d="M0,27.5 H32" stroke="#2460ad" stroke-width="1"/></svg>
<svg style="left:17px;top:579px" width="32" height="29" viewBox="0 0 32 29"><defs><radialGradient id="cb" cx=".45" cy=".3" r=".75"><stop offset="0" stop-color="#a5dbf5"/><stop offset=".55" stop-color="#4fa8dc"/><stop offset="1" stop-color="#2f83bd"/></radialGradient></defs><path d="M16,.8 C25,.8 31,5.5 31,11.5 C31,17.5 25,22.3 16,22.3 C14.8,22.3 13.6,22.2 12.5,22 C11,25 8.5,27.2 5.5,28 C7.2,26 8,23.5 7.8,20.6 C3.6,18.6 1,15.3 1,11.5 C1,5.5 7,.8 16,.8 Z" fill="url(#cb)" stroke="#2d78ae" stroke-width=".7"/><ellipse cx="15" cy="6.5" rx="10.5" ry="4.2" fill="#fff" opacity=".35"/></svg>
<svg style="left:17px;top:618px" width="32" height="32" viewBox="0 0 32 32"><defs><radialGradient id="am" cx=".5" cy=".35" r=".7"><stop offset="0" stop-color="#f2f6fb"/><stop offset=".55" stop-color="#a9bcd6"/><stop offset="1" stop-color="#5e7aa6"/></radialGradient></defs><circle cx="16" cy="16" r="15.3" fill="#1c4f9c" stroke="#143a78" stroke-width=".8"/><circle cx="16" cy="16" r="12.6" fill="url(#am)"/><path d="M4.5,24.5 Q8,19 11.5,17.5 L14.5,12.5 L17.5,13 L23.2,7.2 L22.6,12.4 L25.2,11.4 L21.5,17.5 Q24.5,21.5 22,27 Q15,31 8.5,27.6 Z" fill="#164a9e"/><path d="M16.5,14.8 L20.5,12.5 L18.5,16.5 Z" fill="#0c2d68"/></svg>
<svg style="left:20px;top:660.5px" width="26" height="27" viewBox="0 0 26 27"><rect width="26" height="27" fill="#2e3237"/><path d="M9.8,7.5 L16.5,13.5 L9.8,19.5" fill="none" stroke="#dfe2e6" stroke-width="1.3"/></svg>
<svg style="left:15px;top:758px" width="43" height="42" viewBox="0 0 43 42"><defs><linearGradient id="st" x1="0" y1="0" x2="0" y2="1"><stop offset="0" stop-color="#fdf0d8"/><stop offset=".3" stop-color="#fbe3b8"/><stop offset=".6" stop-color="#f8d08a"/><stop offset="1" stop-color="#f6c870"/></linearGradient><linearGradient id="st3" x1="0" y1="0" x2="0" y2="1"><stop offset="0" stop-color="#f2b91c"/><stop offset="1" stop-color="#f5c52a"/></linearGradient><radialGradient id="st2" cx=".5" cy=".8" r=".32"><stop offset="0" stop-color="#fff04a"/><stop offset="1" stop-color="#f6c62c" stop-opacity="0"/></radialGradient><clipPath id="stc"><path id="stp" d="M21.5,1.8 Q23.2,1.8 24,3.6 L28,12.4 Q28.6,13.6 30,13.8 L39.6,15.2 Q41.6,15.6 42,17 Q42.3,18.3 41,19.6 L34,26.6 Q33,27.6 33.2,29 L34.9,38.6 Q35.1,40.4 34,41.1 Q32.9,41.7 31.4,40.9 L23,36.3 Q21.5,35.6 20,36.3 L11.6,40.9 Q10.1,41.7 9,41.1 Q7.9,40.4 8.1,38.6 L9.8,29 Q10,27.6 9,26.6 L2,19.6 Q.7,18.3 1,17 Q1.4,15.6 3.4,15.2 L13,13.8 Q14.4,13.6 15,12.4 L19,3.6 Q19.8,1.8 21.5,1.8 Z"/></clipPath></defs><use href="#stp" fill="url(#st)"/><g clip-path="url(#stc)"><path d="M0,27.5 Q21,24.5 43,21 V43 H0 Z" fill="url(#st3)"/><rect width="43" height="42" fill="url(#st2)"/></g><use href="#stp" fill="none" stroke="#c9994a" stroke-width="1.3" stroke-linejoin="round"/></svg>
<svg style="left:91px;top:756px" width="44" height="43" viewBox="0 0 44 43"><defs><radialGradient id="cd" cx=".5" cy=".5" r=".5"><stop offset="0" stop-color="#e8f0fb"/><stop offset=".3" stop-color="#7fa2d6"/><stop offset=".65" stop-color="#b5caea"/><stop offset="1" stop-color="#86a6d6"/></radialGradient></defs><path d="M22,6 L34,9 L38,36 L25,40 Z" fill="#c5cedd"/><path d="M8.5,4.5 L30.5,1 L34,8.5 L33.5,38 L22,41 L9,38 Z" fill="#f1f3f6" stroke="#cfd4dc" stroke-width=".6"/><path d="M30.5,1 L34,8.5 L33.5,38 L29.5,33 Z" fill="#d5dae3"/><path d="M12.5,10 L25,8 L25.5,24 L13,25.5 Z" fill="#3d70ab"/><path d="M16,13 L17.5,12.8 L17.5,17 L21,12.5 L22.8,12.5 L19.4,17 L23,21.5 L21,21.8 L17.5,17.6 L17.5,22 L16,22.2 Z" fill="#dce8f6"/><path d="M22,31 L33.6,28.5 L33.5,38 L22,41 Z" fill="#3868a8"/><path d="M22,33 L33.6,30.5 V33 L22,35.5 Z" fill="#dfe8f4"/><ellipse cx="13.2" cy="31.5" rx="12" ry="10.6" fill="url(#cd)" stroke="#7d98c6" stroke-width=".6" transform="rotate(-18 13.2 31.5)"/><ellipse cx="13.2" cy="31.5" rx="3.4" ry="3" fill="#dfe8f5" stroke="#6e8cbd" stroke-width=".8" transform="rotate(-18 13.2 31.5)"/><path d="M11,31.5 H15 L13.6,30.3 M15,31.5 L13.6,32.7" fill="none" stroke="#5b79ad" stroke-width=".8"/></svg>
<svg style="left:169px;top:759px" width="46" height="37" viewBox="0 0 46 37"><defs><linearGradient id="scr" x1="0" y1="0" x2="1" y2="1"><stop offset="0" stop-color="#2f8de6"/><stop offset=".5" stop-color="#4aa3ee"/><stop offset=".52" stop-color="#72bbf5"/><stop offset="1" stop-color="#8bcaf8"/></linearGradient><linearGradient id="tw" x1="0" y1="0" x2="1" y2="0"><stop offset="0" stop-color="#c9cbce"/><stop offset=".45" stop-color="#fafafa"/><stop offset="1" stop-color="#b9bcc0"/></linearGradient></defs><rect x="1.2" y="5" width="8.3" height="30" rx="1" fill="url(#tw)" stroke="#a6a9ad" stroke-width=".6"/><path d="M3.2,8 V28" stroke="#aeb1b5" stroke-width=".8"/><ellipse cx="5.4" cy="34.8" rx="4.4" ry="1.4" fill="#5a5d60"/><ellipse cx="28" cy="32" rx="11.5" ry="3.6" fill="#f3f4f5" stroke="#c4c6c9" stroke-width=".6"/><rect x="24" y="25.5" width="8" height="5.5" fill="#e4e5e7"/><rect x="11.3" y=".7" width="33.6" height="25.6" rx="1.2" fill="#3b4046"/><rect x="13.2" y="2.6" width="29.8" height="21.6" fill="url(#scr)"/></svg>
<svg style="left:249px;top:762px" width="33" height="33" viewBox="0 0 33 33"><path d="M1,32 V9 M32,6.5 V32 M0,31.5 H33" fill="none" stroke="#4c4c4c" stroke-width="2"/><path d="M0,0 H14.2 L18.6,4.6 H33 V9.5 H10.8 L7.5,13.6 H0 Z" fill="#4c4c4c"/></svg>
<svg style="left:317.5px;top:758px" width="40" height="40" viewBox="0 0 40 40"><defs><linearGradient id="ex" x1="0" y1="0" x2="0" y2="1"><stop offset="0" stop-color="#d7433a"/><stop offset=".5" stop-color="#c11f17"/><stop offset="1" stop-color="#a30f08"/></linearGradient><radialGradient id="ex2" cx=".5" cy=".95" r=".6"><stop offset="0" stop-color="#f0602a" stop-opacity=".9"/><stop offset="1" stop-color="#c11f17" stop-opacity="0"/></radialGradient></defs><rect x=".6" y=".6" width="38.8" height="38.8" rx="4" fill="url(#ex)" stroke="#8c0e08" stroke-width="1"/><rect x="1" y="1" width="38" height="38" rx="4" fill="url(#ex2)"/><path d="M1.5,5 Q1.5,1.5 5,1.5 H35 Q38.5,1.5 38.5,5 V15 Q20,21 1.5,15 Z" fill="#fff" opacity=".16"/><path d="M12.2,11.2 A12.3,12.3 0 1 0 27.8,11.2" fill="none" stroke="#fbeeea" stroke-width="5" stroke-linecap="round"/><path d="M20,7 V21.5" stroke="#fbeeea" stroke-width="4.6" stroke-linecap="round"/></svg>
<div class="t" style="left:39.0px;top:326.0px;font-size:13px;line-height:17px;letter-spacing:-0.06px;color:#161616;"><b>lffl (lffl)</b> su <b>lffl-Desktop</b></div>
<div class="t" style="left:282.5px;top:321.0px;font-size:22px;line-height:29px;letter-spacing:-0.11px;color:#141414;">kubuntu</div>
<div class="t" style="left:26.0px;top:360.0px;font-size:13px;line-height:17px;letter-spacing:-0.77px;color:#202020;">Cerca:</div>
<div class="a" style="left:67px;top:359px;width:288px;height:19px;background:#fff;border:1px solid #5aa0cf;border-radius:3px;box-shadow:0 0 2px 1px rgba(120,190,235,.8),inset 0 0 2px 1px rgba(140,200,240,.7)"></div>
<div class="t" style="left:313.3px;top:396.2px;font-size:12px;line-height:16px;letter-spacing:-0.10px;color:#9b9b9b;">Preferiti</div>
<div class="t" style="left:59.2px;top:419.6px;font-size:12.5px;line-height:16px;letter-spacing:-0.18px;color:#1f1f1f;">Browser web</div>
<div class="t" style="left:59.2px;top:435.0px;font-size:11px;line-height:14px;letter-spacing:-0.06px;color:#8c8c8c;">Firefox Browser Web</div>
<div class="t" style="left:59.2px;top:459.6px;font-size:12.5px;line-height:16px;letter-spacing:-0.09px;color:#1f1f1f;">Gestione informazioni personali</div>
<div class="t" style="left:59.2px;top:475.0px;font-size:11px;line-height:14px;letter-spacing:0.07px;color:#8c8c8c;">Kontact</div>
<div class="t" style="left:59.2px;top:499.6px;font-size:12.5px;line-height:16px;letter-spacing:-0.16px;color:#1f1f1f;">Impostazioni di sistema</div>
<div class="t" style="left:59.2px;top:539.6px;font-size:12.5px;line-height:16px;letter-spacing:-0.08px;color:#1f1f1f;">Gestore dei file</div>
<div class="t" style="left:59.2px;top:555.0px;font-size:11px;line-height:14px;color:#8c8c8c;">Dolphin</div>
<div class="t" style="left:59.2px;top:579.6px;font-size:12.5px;line-height:16px;letter-spacing:-0.11px;color:#1f1f1f;">Contatti di messaggistica istantanea</div>
<div class="t" style="left:59.2px;top:595.0px;font-size:11px;line-height:14px;letter-spacing:-0.09px;color:#8c8c8c;">Contatti di MI di KDE</div>
<div class="t" style="left:59.2px;top:619.6px;font-size:12.5px;line-height:16px;letter-spacing:0.02px;color:#1f1f1f;">Lettore audio</div>
<div class="t" style="left:59.2px;top:635.0px;font-size:11px;line-height:14px;letter-spacing:-0.18px;color:#8c8c8c;">Amarok</div>
<div class="t" style="left:59.2px;top:659.6px;font-size:12.5px;line-height:16px;letter-spacing:-0.15px;color:#1f1f1f;">Terminale</div>
<div class="t" style="left:59.2px;top:675.0px;font-size:11px;line-height:14px;letter-spacing:-0.21px;color:#8c8c8c;">Konsole</div>
<div class="t" style="left:15.9px;top:798.7px;font-size:11px;line-height:14px;letter-spacing:0.23px;color:#161616;">Preferiti</div>
<div class="t" style="left:84.0px;top:798.7px;font-size:11px;line-height:14px;color:#161616;">Applicazioni</div>
<div class="t" style="left:167.8px;top:798.7px;font-size:11px;line-height:14px;letter-spacing:-0.01px;color:#161616;">Computer</div>
<div class="t" style="left:246.5px;top:798.7px;font-size:11px;line-height:14px;letter-spacing:-0.11px;color:#161616;">Recenti</div>
<div class="t" style="left:328.0px;top:798.7px;font-size:11px;line-height:14px;letter-spacing:-0.70px;color:#161616;">Esci</div>
<div id="panel"></div>
<svg style="left:6px;top:826px" width="20" height="26" viewBox="0 0 20 26"><path d="M2,.5 V25 M18.5,1 L8,12.6 L18.5,24.2" fill="none" stroke="#5d6773" stroke-width="1.7"/></svg>
<svg style="left:36px;top:835.4px" width="32" height="10" viewBox="0 0 32 10"><defs><radialGradient id="d5.4" cx=".4" cy=".35" r=".7"><stop offset="0" stop-color="#e65560"/><stop offset="1" stop-color="#b00f1c"/></radialGradient></defs><circle cx="5.4" cy="5" r="4.5" fill="url(#d5.4)"/><defs><radialGradient id="d16" cx=".4" cy=".35" r=".7"><stop offset="0" stop-color="#5588dc"/><stop offset="1" stop-color="#1a4aaa"/></radialGradient></defs><circle cx="16" cy="5" r="4.5" fill="url(#d16)"/><defs><radialGradient id="d26.4" cx=".4" cy=".35" r=".7"><stop offset="0" stop-color="#92c855"/><stop offset="1" stop-color="#4a9220"/></radialGradient></defs><circle cx="26.4" cy="5" r="4.5" fill="url(#d26.4)"/></svg>
<svg style="left:82px;top:833px" width="12" height="12" viewBox="0 0 12 12"><path d="M.6,11.4 V.6 H4.6 L6,2.4 H11.4 V11.4 Z" fill="none" stroke="#4a4f5a" stroke-width="1.1"/><path d="M.6,4.2 H8 L4.6,7.6 H.6 Z" fill="#4a4f5a"/></svg>
<div class="a" style="left:1233px;top:826px;width:30px;height:24px;background:linear-gradient(170deg,rgba(110,190,240,0) 0,rgba(110,190,240,.3) 22%,rgba(110,190,240,0) 42%),linear-gradient(180deg,#4684de 0,#5f78e0 35%,#8658dc 65%,#9a48d8 91%,#d9b8f0 92%,#e2c8f4 100%)"></div>
<svg style="left:1271px;top:829px" width="21" height="21" viewBox="0 0 21 21"><defs><linearGradient id="inf" x1="0" y1="0" x2="0" y2="1"><stop offset="0" stop-color="#ececee"/><stop offset="1" stop-color="#d3d3d6"/></linearGradient></defs><circle cx="10.5" cy="10.5" r="10" fill="url(#inf)" stroke="#babac0" stroke-width=".6"/><circle cx="10.5" cy="5.6" r="1.3" fill="#2a2a2a"/><path d="M8.8,9.3 L10.9,8.6 V16 M9,16.2 H12.8" fill="none" stroke="#2a2a2a" stroke-width="1.4"/></svg>
<svg style="left:1301px;top:828px" width="19" height="22" viewBox="0 0 19 22"><defs><linearGradient id="bag" x1="0" y1="0" x2="0" y2="1"><stop offset="0" stop-color="#3583e0"/><stop offset="1" stop-color="#1659c2"/></linearGradient></defs><path d="M5.5,5 V2.6 Q5.5,1 7.2,1 H11.2 Q12.8,1 12.8,2.6 V5" fill="none" stroke="#1c4e9c" stroke-width="1.6"/><path d="M1.6,4.8 H16.6 L17.6,20.6 H.6 Z" fill="url(#bag)" stroke="#134aa6" stroke-width=".7"/><circle cx="8.6" cy="11.2" r="3.2" fill="none" stroke="#bfe0fb" stroke-width="1.5"/><path d="M10.8,13.6 L13.2,16.2" stroke="#bfe0fb" stroke-width="1.6"/><circle cx="15.6" cy="18.4" r="2.6" fill="#e03a3a" stroke="#f3f3f3" stroke-width=".8"/></svg>
<svg style="left:1330px;top:829px" width="17" height="21" viewBox="0 0 17 21"><g fill="none" stroke-linecap="round" stroke-linejoin="round"><path d="M2.6,1.4 L11.6,14 M14.4,1.4 L5.4,14 M5.4,14 Q5.6,18.6 3.2,18.8 Q.9,18.8 1.1,16.2 Q1.6,13.6 5.4,14 M11.6,14 Q11.4,18.6 13.8,18.8 Q16.1,18.8 15.9,16.2 Q15.4,13.6 11.6,14" stroke="#74747a" stroke-width="3.4" opacity=".5"/><path d="M2.6,1.4 L11.6,14 M14.4,1.4 L5.4,14 M5.4,14 Q5.6,18.6 3.2,18.8 Q.9,18.8 1.1,16.2 Q1.6,13.6 5.4,14 M11.6,14 Q11.4,18.6 13.8,18.8 Q16.1,18.8 15.9,16.2 Q15.4,13.6 11.6,14" stroke="#fafafa" stroke-width="2.1"/></g></svg>
<svg style="left:1354.5px;top:829.5px" width="22" height="20" viewBox="0 0 22 20"><g stroke-linecap="round" stroke-linejoin="round"><path d="M1.2,7.4 H4.4 L9.4,3 V17 L4.4,12.6 H1.2 Z" fill="#fafafa" stroke="#74747a" stroke-width="1"/><g fill="none"><path d="M12,6.6 Q14,10 12,13.4 M14.8,4.4 Q18,10 14.8,15.6 M17.8,2.2 Q22.4,10 17.8,17.8" stroke="#74747a" stroke-width="3.2" opacity=".5"/><path d="M12,6.6 Q14,10 12,13.4 M14.8,4.4 Q18,10 14.8,15.6 M17.8,2.2 Q22.4,10 17.8,17.8" stroke="#fafafa" stroke-width="2"/></g></g></svg>
<svg style="left:1383px;top:829.5px" width="22" height="21" viewBox="0 0 22 21"><g fill="none" stroke-linecap="round" stroke-linejoin="round"><path d="M5,1.4 H17 V10.4 H5 Z M11,10.4 V15.4 M1.4,17.4 H8.6 M13.4,17.4 H20.6 M8.6,17.4 Q8.6,15 11,15 Q13.4,15 13.4,17.4 Q13.4,19.8 11,19.8 Q8.6,19.8 8.6,17.4" stroke="#74747a" stroke-width="3.4" opacity=".5"/><path d="M5,1.4 H17 V10.4 H5 Z M11,10.4 V15.4 M1.4,17.4 H8.6 M13.4,17.4 H20.6 M8.6,17.4 Q8.6,15 11,15 Q13.4,15 13.4,17.4 Q13.4,19.8 11,19.8 Q8.6,19.8 8.6,17.4" stroke="#fafafa" stroke-width="2.1"/></g></svg>
<svg style="left:1415px;top:835.5px" width="9" height="6" viewBox="0 0 9 6"><path d="M4.5,.4 L8.6,5.6 H.4 Z" fill="#fafafa" stroke="#909096" stroke-width=".6"/></svg>
<svg style="left:1502px;top:822px" width="22" height="34" viewBox="0 0 22 34"><defs><radialGradient id="cw" cx=".9" cy=".5" r=".9"><stop offset="0" stop-color="#dcdcde"/><stop offset="1" stop-color="#cdcdd0"/></radialGradient></defs><path d="M22,1 Q1,3 1,17 Q1,31 22,33 Z" fill="url(#cw)" stroke="#b4b4b8" stroke-width=".8"/><path d="M12.5,10.5 L16,13.5 L12.5,16.5" fill="none" stroke="#8b8b90" stroke-width="1.6"/><circle cx="9" cy="21" r="1" fill="#a0a0a5"/><circle cx="12" cy="18.5" r=".8" fill="#a0a0a5"/></svg>
<div class="t" style="left:100.4px;top:828.3px;font-size:13px;line-height:17px;letter-spacing:-0.19px;color:#1c1c1c;">lffl – Dolphin</div>
<div class="t" style="left:1435.3px;top:822.7px;font-size:25px;line-height:32px;letter-spacing:-0.41px;color:#fbfbfb;text-shadow:0 0 2px #6d6d72,0 0 1px #6d6d72,0 1px 1px #77777c;">09:45</div>
</div>
</body>
</html>
